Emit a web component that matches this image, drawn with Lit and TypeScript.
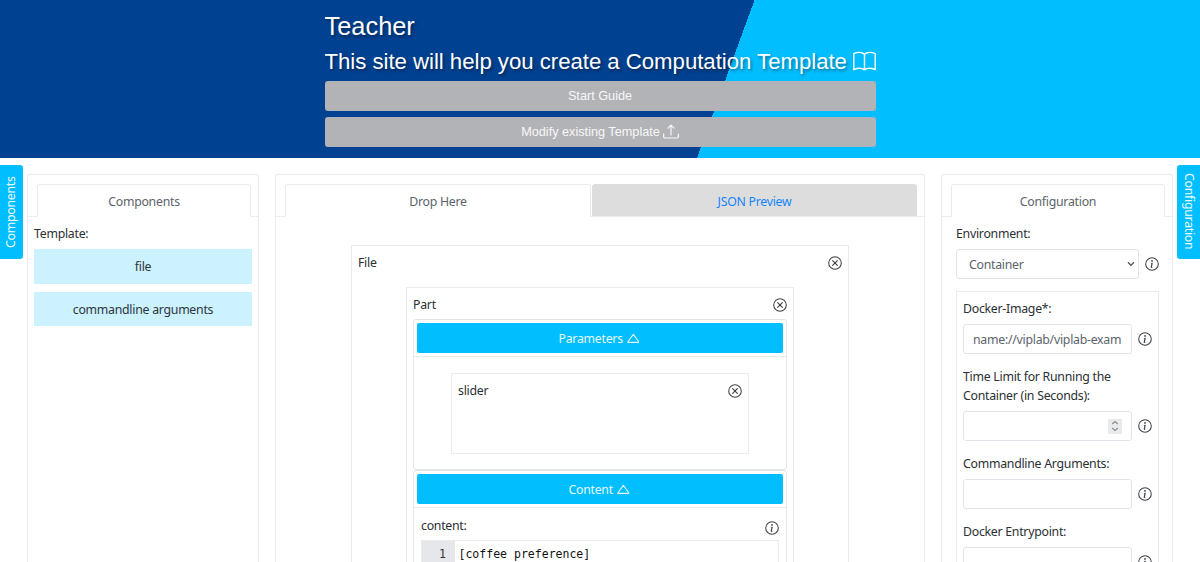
import { LitElement, html, css } from "lit";
import { customElement, property } from "lit/decorators.js";

const closeIcon = html`<svg class="ico" width="14" height="14" viewBox="0 0 16 16" fill="none" stroke="currentColor" stroke-linecap="round">
  <circle cx="8" cy="8" r="7.2" stroke-width="1.2"/><path d="M5.3 5.3 10.7 10.7M10.7 5.3 5.3 10.7" stroke-width="1.3"/></svg>`;
const infoIcon = html`<svg class="ico" width="14" height="14" viewBox="0 0 16 16">
  <circle cx="8" cy="8" r="7.2" fill="none" stroke="currentColor" stroke-width="1.2"/>
  <path fill="currentColor" d="m8.930 6.588-2.290.287-.082.380.450.083c.294.070.352.176.288.469l-.738 3.468c-.194.897.105 1.319.808 1.319.545 0 1.178-.252 1.465-.598l.088-.416c-.200.176-.492.246-.686.246-.275 0-.375-.193-.304-.533zM9 4.500a1 1 0 1 1-2 0 1 1 0 0 1 2 0"/></svg>`;
const triangleIcon = html`<svg width="12.700" height="12.700" viewBox="0 0 16 16"><path fill="none" stroke="currentColor" stroke-width="1.300" stroke-linejoin="round" d="M8 3 14.900 12.300Q15.100 13 14.400 13.100H1.600Q.9 13 1.100 12.300Z"/></svg>`;
const bookIcon = html`<svg class="book" width="23" height="22" viewBox="0 0 23 22" fill="none" stroke="currentColor" stroke-width="1.400" stroke-linejoin="round">
  <path d="M11.500 3.200C9.200 1.100 4.500 1 .8 2.600V18.700C4.500 17.100 9.200 17.100 11.500 18.900C13.800 17.100 18.500 17.100 22.200 18.700V2.600C18.500 1 13.800 1.100 11.500 3.200ZM11.500 3.200V18.900"/></svg>`;
const uploadIcon = html`<svg class="upload" width="16" height="16" viewBox="0 0 16 16" fill="none" stroke="currentColor" stroke-width="1.200" stroke-linecap="round" stroke-linejoin="round">
  <path d="M.6 10V12.500a1.500 1.500 0 0 0 1.500 1.500H13.900a1.500 1.500 0 0 0 1.500-1.500V10M8 11V1.300M5 4.200 8 1.200 11 4.200"/></svg>`;
const chevronIcon = html`<svg width="8" height="6" viewBox="0 0 8 6"><path d="M1 1.200 4 4.400 7 1.200" fill="none" stroke="#4a5056" stroke-width="1.300"/></svg>`;

const base = css`
  * { box-sizing: border-box; }
  svg { display: block; flex: none; }
  .ico { color: #3d4349; }
`;

@customElement("config-field")
class ConfigField extends LitElement {
  @property() label = "";
  @property() value = "";
  @property() kind = "text";
  static styles = [base, css`
    :host { display: block; }
    .label { line-height: 19px; margin-bottom: 6px; }
    .row { display: flex; align-items: center; gap: 6px; }
    .box { flex: 1; min-width: 0; height: 30px; border: 1px solid #e1e4e8; border-radius: 3px; padding: 0 9px; display: flex; align-items: center; color: #5b636a; white-space: nowrap; }
    .text { flex: 1; }
    .box.select { padding: 0 3px 0 12px; }
    .spin { width: 14px; height: 15px; background: #e9eaec; display: flex; align-items: center; justify-content: center; }
  `];
  render() {
    return html`<div class="label">${this.label}</div>
      <div class="row"><div class="box ${this.kind}">
        <span class="text">${this.value}</span>
        ${this.kind === "select" ? chevronIcon : ""}
        ${this.kind === "number" ? html`<span class="spin"><svg width="8" height="12" viewBox="0 0 8 12" fill="none" stroke="#85898e" stroke-width="1.100"><path d="M1.200 4 4 1.500 6.800 4M1.200 8 4 10.500 6.800 8"/></svg></span>` : ""}
      </div>${infoIcon}</div>`;
  }
}

@customElement("app-root")
class AppRoot extends LitElement {
  static styles = [base, css`
    :host { display: block; height: 562px; overflow: hidden; position: relative; background: #fff; color: #2a2f34; font: 12.300px/19px "Noto Sans", sans-serif; letter-spacing: -0.260px; }
    header { height: 158px; background: linear-gradient(110deg, #004191 60%, #00beff 60%); display: flex; justify-content: center; font-family: "Liberation Sans", sans-serif; font-size: 12.700px; letter-spacing: 0; color: #fff; }
    .hero { width: 551px; padding-top: 11px; }
    h1, h2 { margin: 0; font-weight: 400; text-shadow: 1.500px 1.500px 3px rgba(0,0,0,.4); white-space: nowrap; }
    h1 { font-size: 25.400px; line-height: 31px; }
    h2 { font-size: 22.200px; line-height: 27px; margin: 6px 0 5.500px; display: flex; align-items: center; gap: 6px; letter-spacing: -0.025px; }
    .gray { height: 30px; margin-bottom: 6.500px; padding-top: 1px; border-radius: 3px; background: #b2b3b7; display: flex; align-items: center; justify-content: center; gap: 3px; color: #f7f7f8; }
    .upload { margin-bottom: 1px; }
    main { display: flex; padding: 16px 27px 0; gap: 16px; height: 404px; }
    .card { border: 1px solid #e9ecef; border-bottom: 0; border-radius: 3px 3px 0 0; height: 420px; }
    .side { width: 232px; flex: none; }
    .center { flex: 1; }
    .tabs { display: flex; padding: 9px 7px 0 9px; height: 42px; border-bottom: 1px solid #e9ecef; }
    .tab { flex: 1; height: 33px; border: 1px solid #e9ecef; border-bottom: 0; border-radius: 3px 3px 0 0; background: #fff; text-align: center; line-height: 33px; color: #5b636a; }
    .tab.other { flex: none; width: 325px; height: 32px; margin-left: 1px; background: #ddd; border: 0; line-height: 35px; color: #1583fb; }
    .left-body { padding: 7px 6px; }
    .item { height: 34.500px; margin-bottom: 8px; background: #ccf1ff; line-height: 36px; text-align: center; color: #2c363d; }
    .left-body .item:first-of-type { margin-top: 6px; }
    .drop { padding: 28px 75px 0; }
    .node { border: 1px solid #e9ecef; }
    .title { display: flex; justify-content: space-between; align-items: center; padding: 0 6px; height: 19px; }
    .file { height: 420px; padding-top: 7px; }
    .part { margin: 15px 54px 0; height: 400px; padding-top: 7px; }
    .panel { margin: 0 6px; border: 1px solid #e3e6e9; border-radius: 3px; }
    .panel.first { margin-top: 5px; }
    .panel .head { padding: 3px; height: 37px; border-bottom: 1px solid #e9ecef; }
    .toggle { height: 30px; padding: 1px 2px 0 0; border-radius: 2px; background: #00beff; color: #e6f8ff; display: flex; align-items: center; justify-content: center; gap: 4px; }
    .params { padding: 16px 37px; height: 112px; }
    .slider { height: 81px; padding-top: 7px; }
    .content { padding: 8px 7px; }
    .content .title { padding: 0; }
    .content .title svg { margin-top: 4px; }
    .editor { margin-top: 5px; height: 60px; border: 1px solid #e9ecef; display: flex; font: 11.520px/15px "DejaVu Sans Mono", monospace; letter-spacing: 0; color: #111; }
    .gutter { width: 33px; background: #e6e7ea; padding: 6px 9px; text-align: right; color: #333; }
    .line { padding: 6px 3.500px; white-space: pre; }
    .right-body { padding: 7px 14px; }
    .fields { margin-top: 12px; border: 1px solid #e9ecef; padding: 7px 6px; height: 400px; width: 203px; }
    .fields config-field { margin-bottom: 13px; }
    .env { width: 203px; }
    .edge { position: absolute; top: 164.500px; width: 23px; height: 94px; background: #00beff; color: #f0fbff; writing-mode: vertical-rl; display: flex; align-items: center; justify-content: center; }
    .edge.l { left: 0; padding-left: 2px; border-radius: 3px 0 0 3px; transform: rotate(180deg); }
    .edge.r { right: 0; padding-left: 1px; border-radius: 3px 0 0 3px; }
  `];
  render() {
    return html`
      <header><div class="hero">
        <h1>Teacher</h1>
        <h2><span>This site will help you create a Computation Template</span>${bookIcon}</h2>
        <div class="gray">Start Guide</div>
        <div class="gray">Modify existing Template ${uploadIcon}</div>
      </div></header>
      <main>
        <section class="card side">
          <div class="tabs"><div class="tab">Components</div></div>
          <div class="left-body"><span>Template:</span>
            <div class="item">file</div><div class="item">commandline arguments</div></div>
        </section>
        <section class="card center">
          <div class="tabs"><div class="tab">Drop Here</div><div class="tab other">JSON Preview</div></div>
          <div class="drop"><div class="node file">
            <div class="title"><span>File</span>${closeIcon}</div>
            <div class="node part">
              <div class="title"><span>Part</span>${closeIcon}</div>
              <div class="panel first">
                <div class="head"><div class="toggle">Parameters ${triangleIcon}</div></div>
                <div class="params"><div class="node slider"><div class="title"><span>slider</span>${closeIcon}</div></div></div>
              </div>
              <div class="panel">
                <div class="head"><div class="toggle">Content ${triangleIcon}</div></div>
                <div class="content"><div class="title"><span>content:</span>${infoIcon}</div>
                  <div class="editor"><div class="gutter">1</div><div class="line">[coffee preference]</div></div></div>
              </div>
            </div>
          </div></div>
        </section>
        <section class="card side">
          <div class="tabs"><div class="tab">Configuration</div></div>
          <div class="right-body">
            <config-field class="env" label="Environment:" value="Container" kind="select"></config-field>
            <div class="fields">
              <config-field label="Docker-Image*:" value="name://viplab/viplab-exam"></config-field>
              <config-field label="Time Limit for Running the Container (in Seconds):" kind="number"></config-field>
              <config-field label="Commandline Arguments:"></config-field>
              <config-field label="Docker Entrypoint:"></config-field>
            </div>
          </div>
        </section>
      </main>
      <div class="edge l">Components</div>
      <div class="edge r">Configuration</div>`;
  }
}
